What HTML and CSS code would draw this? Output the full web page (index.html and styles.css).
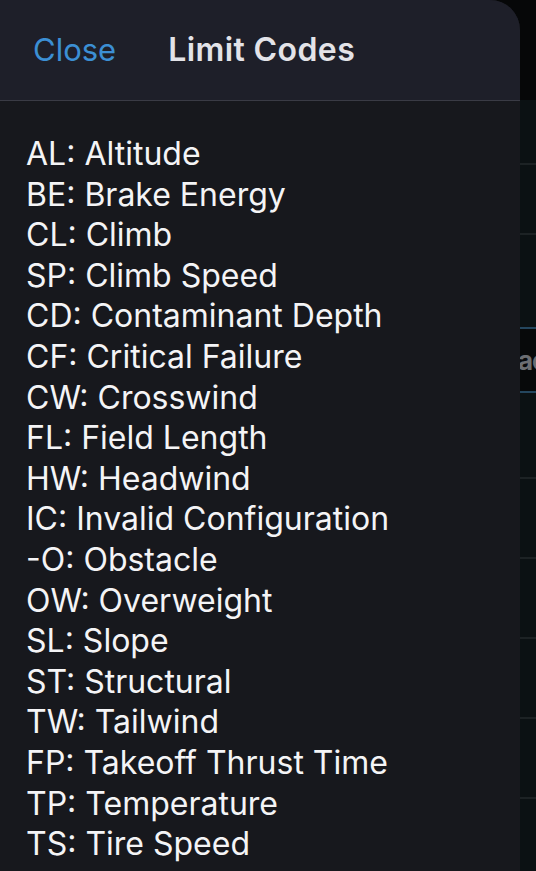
FILE: index.html
```html
<!DOCTYPE html>
<html>
<head>
<meta charset="utf-8">
<link rel="stylesheet" href="styles.css">
</head>
<body>
<div class="backdrop">
  <div class="bd-top"></div>
  <div class="bd-row r1"></div>
  <div class="bd-row r2"></div>
  <div class="bd-row r3"></div>
  <div class="bd-section"><span class="bd-text">ac</span></div>
  <div class="bd-row r4"></div>
  <div class="bd-row r5"></div>
  <div class="bd-row r5"></div>
  <div class="bd-row r5"></div>
  <div class="bd-row r5"></div>
  <div class="bd-row r6"></div>
</div>
<div class="sheet">
  <header class="sheet-header">
    <span class="close">Close</span>
    <span class="title">Limit Codes</span>
  </header>
  <ul class="codes">
    <li>AL: Altitude</li>
    <li>BE: Brake Energy</li>
    <li>CL: Climb</li>
    <li>SP: Climb Speed</li>
    <li>CD: Contaminant Depth</li>
    <li>CF: Critical Failure</li>
    <li>CW: Crosswind</li>
    <li>FL: Field Length</li>
    <li>HW: Headwind</li>
    <li>IC: Invalid Configuration</li>
    <li>-O: Obstacle</li>
    <li>OW: Overweight</li>
    <li>SL: Slope</li>
    <li>ST: Structural</li>
    <li>TW: Tailwind</li>
    <li>FP: Takeoff Thrust Time</li>
    <li>TP: Temperature</li>
    <li>TS: Tire Speed</li>
  </ul>
</div>
</body>
</html>
```

FILE: styles.css
```css
* { box-sizing: border-box; }
html, body {
  margin: 0;
  padding: 0;
  width: 536px;
  height: 871px;
  overflow: hidden;
  background: #0a0f11;
  font-family: Inter, "Noto Sans", sans-serif;
}
body { position: relative; }

.backdrop {
  display: flex;
  flex-direction: column;
  width: 536px;
  height: 871px;
}
.bd-top { height: 100px; background: #060708; }
.bd-row { border-bottom: 2px solid #1c2224; background: #0b1113; }
.r1 { height: 65px; }
.r2 { height: 70px; }
.r3 { height: 94px; border-bottom: 2px solid #24465e; }
.bd-section {
  height: 64px;
  border-bottom: 2px solid #24465e;
  background: #07090a;
  display: flex;
  align-items: center;
  padding-left: 518px;
  overflow: hidden;
}
.bd-text {
  font-size: 26px;
  font-weight: 700;
  color: #6b6e72;
  letter-spacing: -1px;
  white-space: nowrap;
}
.r4 { height: 86px; }
.r5 { height: 80px; }
.r6 { flex: 1; border-bottom: none; }

.sheet {
  position: absolute;
  left: 0;
  top: 0;
  width: 520px;
  height: 871px;
  background: #17181d;
  border-top-right-radius: 30px;
  overflow: hidden;
}
.sheet-header {
  height: 101px;
  background: #1e1f29;
  border-bottom: 1px solid #3a3b45;
  display: flex;
  align-items: center;
  padding-left: 33px;
  gap: 52px;
  padding-bottom: 1px;
}
.close {
  font-size: 31px;
  color: #3c8fd4;
}
.title {
  font-size: 32px;
  font-weight: 600;
  color: #e3e3e8;
  letter-spacing: 0.4px;
}
.codes {
  list-style: none;
  margin: 0;
  padding: 33px 0 0 26px;
}
.codes li {
  font-size: 32px;
  line-height: 40.6px;
  color: #f4f4f6;
}
```
